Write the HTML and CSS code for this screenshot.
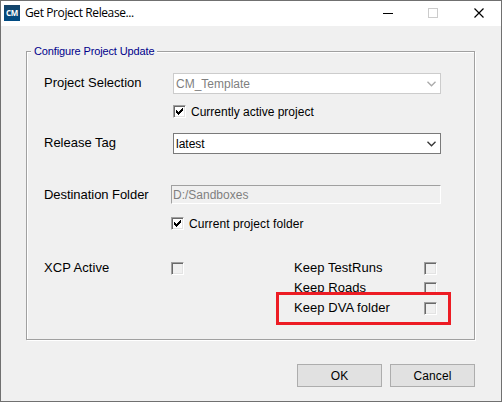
FILE: index.html
```html
<!DOCTYPE html>
<html lang="en">
<head>
<meta charset="utf-8">
<title>Get Project Release...</title>
<link rel="stylesheet" href="styles.css">
</head>
<body>
<div class="window">
  <header class="titlebar">
    <span class="logo">CM</span>
    <span class="title">Get Project Release...</span>
    <svg class="controls" width="104" height="12" viewBox="0 0 104 12" fill="none" shape-rendering="crispEdges">
      <path d="M0 6.500h10" stroke="#000"/>
      <path d="M45.500 1.500h9v9h-9z" stroke="#ccc"/>
      <path d="M91.500 1.500l9 9M100.500 1.500l-9 9" stroke="#000" stroke-width="1.200" shape-rendering="auto"/>
    </svg>
  </header>
  <fieldset class="group">
    <legend>Configure Project Update</legend>
    <div class="row row-project">
      <label>Project Selection</label>
      <div class="combo disabled"><span>CM_Template</span>
        <svg width="9" height="6" viewBox="0 0 9 6" fill="none" stroke="currentColor" stroke-width="1.300"><path d="M.5 .8l4 4 4-4"/></svg>
      </div>
    </div>
    <div class="row row-active">
      <span class="check"><svg width="7" height="7" viewBox="0 0 7 7" shape-rendering="crispEdges"><path d="M0 2h1v1h1v1h1V3h1V2h1V1h1V0h1v3H6v1H5v1H4v1H3v1H2V6H1V5H0z"/></svg></span>
      <span>Currently active project</span>
    </div>
    <div class="row row-tag">
      <label>Release Tag</label>
      <div class="combo"><span>latest</span>
        <svg width="9" height="6" viewBox="0 0 9 6" fill="none" stroke="currentColor" stroke-width="1.300"><path d="M.5 .8l4 4 4-4"/></svg>
      </div>
    </div>
    <div class="row row-folder">
      <label>Destination Folder</label>
      <div class="entry">D:/Sandboxes</div>
    </div>
    <div class="row row-current">
      <span class="check"><svg width="7" height="7" viewBox="0 0 7 7" shape-rendering="crispEdges"><path d="M0 2h1v1h1v1h1V3h1V2h1V1h1V0h1v3H6v1H5v1H4v1H3v1H2V6H1V5H0z"/></svg></span>
      <span>Current project folder</span>
    </div>
    <div class="options">
      <label>XCP Active</label><span class="check off"></span>
      <label>Keep TestRuns</label><span class="check off"></span>
      <label class="keep">Keep Roads</label><span class="check off"></span>
      <label class="keep">Keep DVA folder</label><span class="check off"></span>
    </div>
    <div class="highlight"></div>
  </fieldset>
  <footer class="buttons">
    <button>OK</button>
    <button>Cancel</button>
  </footer>
</div>
</body>
</html>
```
FILE: styles.css
```css
* { box-sizing: border-box; }
body { margin: 0; font: 12px/14px "Liberation Sans", Arial, sans-serif; color: #000; }
.window { width: 502px; height: 402px; background: #f0f0f0; border: 1px solid #707070; overflow: hidden; }
.titlebar { height: 25px; background: #fff; display: flex; align-items: center; padding: 0 14px 0 3px; }
.logo { width: 16px; height: 16px; margin-top: -1px; background: linear-gradient(#164469, #004b83); color: #fff; font: bold 8px/16px "Open Sans", sans-serif; text-align: center; letter-spacing: -.2px; }
.title { margin: -1px 0 0 5px; font: 12px/16px "Open Sans", sans-serif; letter-spacing: -.4px; white-space: nowrap; }
.controls { margin: -1px 0 0 auto; }
.group { position: relative; width: 449px; height: 289px; margin: 25px 0 0 25px; padding: 21px 0 0 17px; border: 1px solid #a0a0a0; box-shadow: 1px 1px 0 #fff, inset 1px 1px 0 #fff; }
.group legend { float: left; width: 126px; height: 14px; margin: -29px 0 0 -13px; padding-left: 3px; background: #f0f0f0; color: #00008b; font-size: 11px; letter-spacing: -.13px; white-space: nowrap; }
.row { clear: both; display: flex; align-items: center; white-space: nowrap; }
label { font-size: 13px; line-height: 15px; white-space: nowrap; }
.row label { width: 129px; }
.row-project label, .row-tag label { margin-top: -2px; }
.combo { width: 268px; height: 21px; border: 1px solid #7a7a7a; background: #fff; display: flex; align-items: center; justify-content: space-between; padding: 0 4px 0 2px; color: #333; }
.combo span { color: #000; margin-top: 1px; }
.combo.disabled { border-color: #ccc; color: #aaa; }
.combo.disabled span { color: #7f7f7f; }
.row-active { margin: 11px 0 0 129px; height: 13px; gap: 5px; }
.row-tag { margin-top: 15px; }
.row-folder { margin-top: 31px; }
.row-folder label { width: 127px; letter-spacing: -.05px; }
.entry { width: 270px; height: 19px; border: 1px solid; border-color: #a0a0a0 #fff #fff #a0a0a0; padding: 2px 0 0 1px; color: #7f7f7f; }
.row-current { margin: 13px 0 0 127px; height: 13px; gap: 5px; letter-spacing: .08px; }
.check { width: 13px; height: 13px; flex: none; border: 1px solid; border-color: #a0a0a0 #fff #fff #a0a0a0; box-shadow: inset 1px 1px 0 #696969, inset -1px -1px 0 #e3e3e3; background: #fff; display: flex; align-items: center; justify-content: center; }
.check.off { background: #f0f0f0; }
.options { margin-top: 28px; display: grid; grid-template-columns: 127px 123px 130px 13px; grid-auto-rows: 20px; align-items: center; }
.options label { margin-top: -2px; letter-spacing: .05px; }
.options .keep { grid-column: 3; }
.highlight { position: absolute; left: 249px; top: 240px; width: 175px; height: 33px; border: 3px solid #ed1c24; }
.buttons { display: flex; gap: 8px; margin: 24px 0 0 296px; }
button { width: 85px; height: 23px; padding: 0; border: 1px solid #adadad; background: #e1e1e1; color: #000; font: 12px/14px "Liberation Sans", Arial, sans-serif; letter-spacing: .1px; }
```
